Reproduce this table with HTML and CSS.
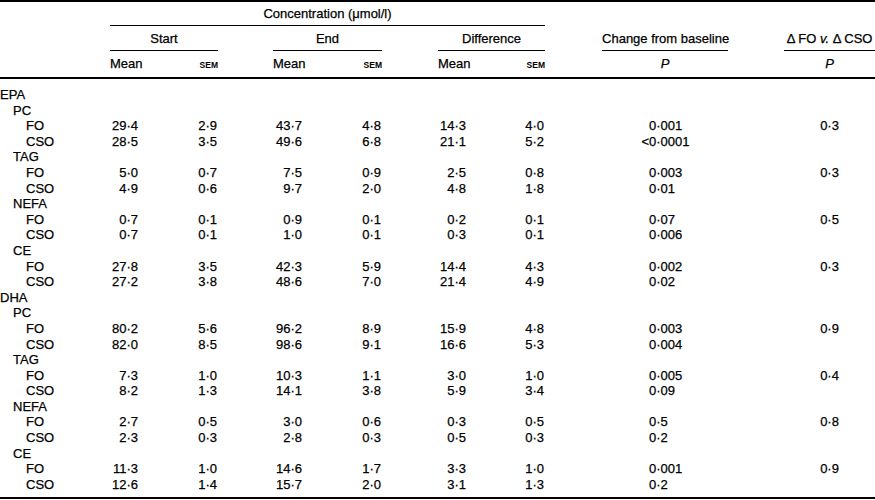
FILE: index.html
```html
<!DOCTYPE html>
<html lang="en">
<head>
<meta charset="utf-8">
<title>Concentration table</title>
<link rel="stylesheet" href="styles.css">
</head>
<body>
<table class="tbl">
  <colgroup>
    <col class="c-stub">
    <col class="c-m1"><col class="c-s1">
    <col class="c-g1">
    <col class="c-m2"><col class="c-s2">
    <col class="c-g2">
    <col class="c-m3"><col class="c-s3">
    <col class="c-g3">
    <col class="c-p1">
    <col class="c-g4">
    <col class="c-p2">
  </colgroup>
  <thead>
    <tr class="hr1">
      <td></td>
      <th colspan="8" class="rule">Concentration (μmol/l)</th>
      <td></td><td></td><td></td><td></td>
    </tr>
    <tr class="hr2">
      <td></td>
      <th colspan="2" class="rule">Start</th>
      <td></td>
      <th colspan="2" class="rule">End</th>
      <td></td>
      <th colspan="2" class="rule">Difference</th>
      <td></td>
      <th class="rule">Change from baseline</th>
      <td></td>
      <th class="rule">Δ FO <i>v.</i> Δ CSO</th>
    </tr>
    <tr class="hr3">
      <td></td>
      <th class="mh">Mean</th><th class="sh">SEM</th>
      <td></td>
      <th class="mh">Mean</th><th class="sh">SEM</th>
      <td></td>
      <th class="mh">Mean</th><th class="sh">SEM</th>
      <td></td>
      <th class="ph"><i>P</i></th>
      <td></td>
      <th class="ph"><i>P</i></th>
    </tr>
  </thead>
  <tbody>
    <tr class="first"><td class="l1" colspan="13">EPA</td></tr>
    <tr><td class="l2" colspan="13">PC</td></tr>
    <tr><td class="l3">FO</td><td class="mean">29·4</td><td class="sem">2·9</td><td></td><td class="mean">43·7</td><td class="sem">4·8</td><td></td><td class="mean">14·3</td><td class="sem">4·0</td><td></td><td class="p1">0·001</td><td></td><td class="p2">0·3</td></tr>
    <tr><td class="l3">CSO</td><td class="mean">28·5</td><td class="sem">3·5</td><td></td><td class="mean">49·6</td><td class="sem">6·8</td><td></td><td class="mean">21·1</td><td class="sem">5·2</td><td></td><td class="p1"><span class="lt">&lt;</span>0·0001</td><td></td><td class="p2"></td></tr>
    <tr><td class="l2" colspan="13">TAG</td></tr>
    <tr><td class="l3">FO</td><td class="mean">5·0</td><td class="sem">0·7</td><td></td><td class="mean">7·5</td><td class="sem">0·9</td><td></td><td class="mean">2·5</td><td class="sem">0·8</td><td></td><td class="p1">0·003</td><td></td><td class="p2">0·3</td></tr>
    <tr><td class="l3">CSO</td><td class="mean">4·9</td><td class="sem">0·6</td><td></td><td class="mean">9·7</td><td class="sem">2·0</td><td></td><td class="mean">4·8</td><td class="sem">1·8</td><td></td><td class="p1">0·01</td><td></td><td class="p2"></td></tr>
    <tr><td class="l2" colspan="13">NEFA</td></tr>
    <tr><td class="l3">FO</td><td class="mean">0·7</td><td class="sem">0·1</td><td></td><td class="mean">0·9</td><td class="sem">0·1</td><td></td><td class="mean">0·2</td><td class="sem">0·1</td><td></td><td class="p1">0·07</td><td></td><td class="p2">0·5</td></tr>
    <tr><td class="l3">CSO</td><td class="mean">0·7</td><td class="sem">0·1</td><td></td><td class="mean">1·0</td><td class="sem">0·1</td><td></td><td class="mean">0·3</td><td class="sem">0·1</td><td></td><td class="p1">0·006</td><td></td><td class="p2"></td></tr>
    <tr><td class="l2" colspan="13">CE</td></tr>
    <tr><td class="l3">FO</td><td class="mean">27·8</td><td class="sem">3·5</td><td></td><td class="mean">42·3</td><td class="sem">5·9</td><td></td><td class="mean">14·4</td><td class="sem">4·3</td><td></td><td class="p1">0·002</td><td></td><td class="p2">0·3</td></tr>
    <tr><td class="l3">CSO</td><td class="mean">27·2</td><td class="sem">3·8</td><td></td><td class="mean">48·6</td><td class="sem">7·0</td><td></td><td class="mean">21·4</td><td class="sem">4·9</td><td></td><td class="p1">0·02</td><td></td><td class="p2"></td></tr>
    <tr><td class="l1" colspan="13">DHA</td></tr>
    <tr><td class="l2" colspan="13">PC</td></tr>
    <tr><td class="l3">FO</td><td class="mean">80·2</td><td class="sem">5·6</td><td></td><td class="mean">96·2</td><td class="sem">8·9</td><td></td><td class="mean">15·9</td><td class="sem">4·8</td><td></td><td class="p1">0·003</td><td></td><td class="p2">0·9</td></tr>
    <tr><td class="l3">CSO</td><td class="mean">82·0</td><td class="sem">8·5</td><td></td><td class="mean">98·6</td><td class="sem">9·1</td><td></td><td class="mean">16·6</td><td class="sem">5·3</td><td></td><td class="p1">0·004</td><td></td><td class="p2"></td></tr>
    <tr><td class="l2" colspan="13">TAG</td></tr>
    <tr><td class="l3">FO</td><td class="mean">7·3</td><td class="sem">1·0</td><td></td><td class="mean">10·3</td><td class="sem">1·1</td><td></td><td class="mean">3·0</td><td class="sem">1·0</td><td></td><td class="p1">0·005</td><td></td><td class="p2">0·4</td></tr>
    <tr><td class="l3">CSO</td><td class="mean">8·2</td><td class="sem">1·3</td><td></td><td class="mean">14·1</td><td class="sem">3·8</td><td></td><td class="mean">5·9</td><td class="sem">3·4</td><td></td><td class="p1">0·09</td><td></td><td class="p2"></td></tr>
    <tr><td class="l2" colspan="13">NEFA</td></tr>
    <tr><td class="l3">FO</td><td class="mean">2·7</td><td class="sem">0·5</td><td></td><td class="mean">3·0</td><td class="sem">0·6</td><td></td><td class="mean">0·3</td><td class="sem">0·5</td><td></td><td class="p1">0·5</td><td></td><td class="p2">0·8</td></tr>
    <tr><td class="l3">CSO</td><td class="mean">2·3</td><td class="sem">0·3</td><td></td><td class="mean">2·8</td><td class="sem">0·3</td><td></td><td class="mean">0·5</td><td class="sem">0·3</td><td></td><td class="p1">0·2</td><td></td><td class="p2"></td></tr>
    <tr><td class="l2" colspan="13">CE</td></tr>
    <tr><td class="l3">FO</td><td class="mean">11·3</td><td class="sem">1·0</td><td></td><td class="mean">14·6</td><td class="sem">1·7</td><td></td><td class="mean">3·3</td><td class="sem">1·0</td><td></td><td class="p1">0·001</td><td></td><td class="p2">0·9</td></tr>
    <tr class="last"><td class="l3">CSO</td><td class="mean">12·6</td><td class="sem">1·4</td><td></td><td class="mean">15·7</td><td class="sem">2·0</td><td></td><td class="mean">3·1</td><td class="sem">1·3</td><td></td><td class="p1">0·2</td><td></td><td class="p2"></td></tr>
  </tbody>
</table>
</body>
</html>
```

FILE: styles.css
```css
html, body {
  margin: 0;
  padding: 0;
  background: #ffffff;
}

body {
  color: #000000;
  font-family: "Liberation Sans", Arial, sans-serif;
  font-size: 13px;
  -webkit-text-stroke: 0.25px #000;
}

.tbl {
  width: 875px;
  table-layout: fixed;
  border-collapse: separate;
  border-spacing: 0;
  border-top: 2px solid #000;
  border-bottom: 2px solid #000;
}

.c-stub { width: 110px; }
.c-m1 { width: 54px; }
.c-s1 { width: 54px; }
.c-g1 { width: 55px; }
.c-m2 { width: 55px; }
.c-s2 { width: 54px; }
.c-g2 { width: 56px; }
.c-m3 { width: 54px; }
.c-s3 { width: 53px; }
.c-g3 { width: 57px; }
.c-p1 { width: 126px; }
.c-g4 { width: 56px; }
.c-p2 { width: 91px; }

.tbl th,
.tbl td {
  padding: 0;
  font-weight: normal;
  white-space: nowrap;
}

/* header rows */
.tbl .hr1 > *,
.tbl .hr2 > *,
.tbl .hr3 > * {
  line-height: 15px;
  vertical-align: middle;
}

.tbl .hr1 > * { padding: 4px 0; }
.tbl .hr2 > * { padding: 4.5px 0; }
.tbl .hr3 > * {
  padding: 4.5px 0;
  border-bottom: 2px solid #000;
  vertical-align: baseline;
}

.tbl .rule {
  border-bottom: 1px solid #000;
  text-align: center;
}

.tbl .mh { text-align: left; }

.tbl .sh {
  text-align: right;
  font-size: 8.5px;
  font-weight: bold;
  -webkit-text-stroke: 0;
}

.tbl .ph { text-align: center; }

/* body rows */
.tbl tbody td {
  line-height: 15.6px;
  vertical-align: middle;
}

.tbl tbody tr.first td { padding-top: 8px; }
.tbl tbody tr.last td { padding-bottom: 5px; }

.tbl .l1 { text-align: left; }
.tbl .l2 { padding-left: 13px; text-align: left; }
.tbl .l3 { padding-left: 26px; text-align: left; }

.tbl .mean {
  text-align: right;
  padding-right: 26px;
}

.tbl .sem {
  text-align: right;
  padding-right: 1px;
}

.tbl .p1 {
  text-align: left;
  padding-left: 47px;
}

.tbl .p2 { text-align: center; }

.lt { margin-left: -0.584em; }
```
